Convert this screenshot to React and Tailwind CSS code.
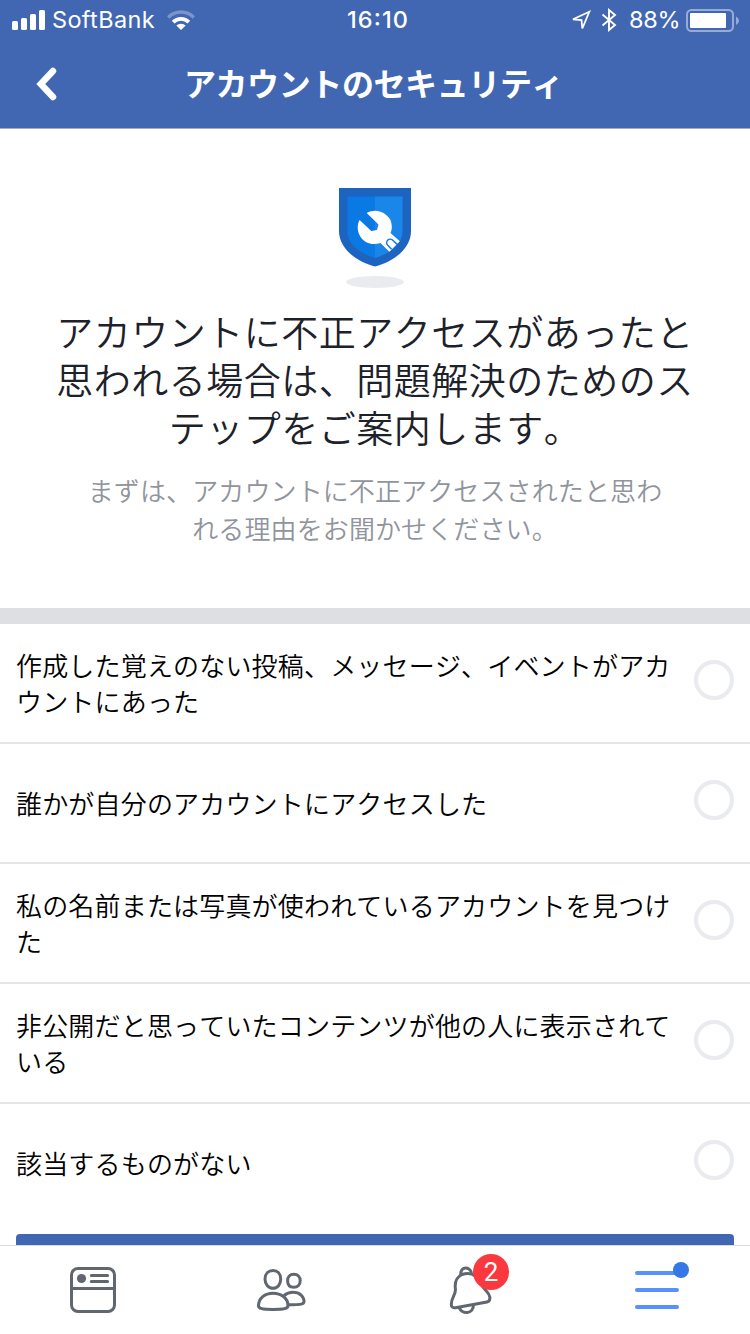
import React from "react";

const OPTIONS = [
  ["作成した覚えのない投稿、メッセージ、イベントがアカ", "ウントにあった"],
  ["誰かが自分のアカウントにアクセスした"],
  ["私の名前または写真が使われているアカウントを見つけ", "た"],
  ["非公開だと思っていたコンテンツが他の人に表示されて", "いる"],
  ["該当するものがない"],
];

function StatusBar() {
  return (
    <div className="grid h-10 grid-cols-3 items-center font-['Inter','Liberation_Sans',sans-serif] text-[23.5px] leading-10 text-white">
      <div className="flex items-center pl-3">
        <svg width="33" height="20" viewBox="0 0 33 20" fill="#fff">
          <rect x="0" y="11" width="6" height="9" rx="1.5" />
          <rect x="9" y="8" width="6" height="12" rx="1.5" />
          <rect x="18" y="4" width="6" height="16" rx="1.5" />
          <rect x="27" y="0" width="6" height="20" rx="1.5" />
        </svg>
        <span className="ml-[7px] w-[103px] whitespace-nowrap tracking-[0.35px]">SoftBank</span>
        <svg className="ml-[12px]" width="28" height="20" viewBox="0 0 28 20">
          <path d="M0 6.2A19.5 19.5 0 0 1 28 6.2L25.6 8.8A16 16 0 0 0 2.4 8.8Z" fill="#fff" opacity=".3" />
          <path d="M4.8 10.8A13 13 0 0 1 23.2 10.8L20.5 13.6A9 9 0 0 0 7.5 13.6Z" fill="#fff" />
          <path d="M9.3 15.6A6.6 6.6 0 0 1 18.7 15.6L14 20Z" fill="#fff" />
        </svg>
      </div>
      <div className="text-center text-[23.5px] font-[550] tracking-[1.1px] [font-feature-settings:'case']">
        <span className="ml-[6px]">16:10</span>
      </div>
      <div className="flex items-center justify-end pr-[11px]">
        <svg width="22" height="22" viewBox="0 0 22 22" fill="none" stroke="#fff" strokeWidth="1.8" strokeLinejoin="miter" strokeMiterlimit="3">
          <path d="M19.3 2.8L3 10.3L11.5 11L12.3 19.5Z" />
        </svg>
        <svg className="ml-[9px]" width="16" height="24" viewBox="0 0 16 24" fill="none" stroke="#fff" strokeWidth="1.9">
          <path d="M1.5 6.5L14 17L8 22V2L14 7L1.5 17.5" />
        </svg>
        <span className="ml-[12px] w-[52px] whitespace-nowrap tracking-[-0.3px]">88%</span>
        <svg className="ml-[5px]" width="53" height="24" viewBox="0 0 53 24">
          <rect x="1" y="2" width="46" height="21" rx="4.5" fill="none" stroke="#fff" strokeOpacity=".45" strokeWidth="2" />
          <rect x="4" y="5" width="36" height="15" rx="1" fill="#fff" />
          <path d="M50 8.5Q53 10 53 12.7T50 17Z" fill="#fff" opacity=".45" />
        </svg>
      </div>
    </div>
  );
}

function Header() {
  return (
    <header className="h-[129px] shrink-0 border-b border-[#a9a9ab] bg-[#4267b2]">
      <StatusBar />
      <div className="grid h-[88px] grid-cols-[120px_1fr_120px] items-center">
        <svg className="ml-9" width="22" height="34" viewBox="0 0 22 34" fill="none" stroke="#fff" strokeWidth="6.5" strokeLinecap="round" strokeLinejoin="miter">
          <path d="M17 4L4.8 17L17 30" />
        </svg>
        <h1 className="-mt-1 whitespace-nowrap pr-[3px] text-center text-[32px] font-bold leading-[44px] tracking-[-0.4px] text-white [font-kerning:none]">
          アカウントのセキュリティ
        </h1>
      </div>
    </header>
  );
}

function Shield() {
  return (
    <svg className="mx-auto block" width="72" height="101" viewBox="0 0 72 101">
      <path d="M0 0H72V43C72 60 56 73 36 78.6C16 73 0 60 0 43Z" fill="#1d64c0" />
      <path d="M8.5 8.5H36V70C20 65 8.5 56 8.5 43Z" fill="#0b79e3" />
      <path d="M36 8.5H63.5V43C63.5 56 52 65 36 70Z" fill="#1a86ea" />
      <path d="M27.7 25C37 19.8 47 24.5 51.5 32C53.3 37 53.3 41.5 51.5 45L60.8 53.2L50.3 63.8L41.5 55C32 58.2 23 54 19.8 45.5C18 40 18.7 35.5 20.6 32L32.3 43L38 42L39.5 36.5Z" fill="#fff" />
      <path d="M52.6 61.2L48.6 57A3.4 3.4 0 0 1 53.8 52.3L58.2 56.4" fill="none" stroke="#1a79dd" strokeWidth="1.5" />
      <ellipse cx="36" cy="94" rx="29" ry="6" fill="#e9ebee" />
    </svg>
  );
}

function Option({ lines, last }) {
  return (
    <li className={last ? "flex h-[118px] items-center px-4" : "flex h-[120px] items-center border-b-2 border-[#e5e5e7] px-4"}>
      <p className="flex-1 whitespace-nowrap text-[26px] font-[350] leading-9 tracking-[0.18px] text-black [font-kerning:none]">
        {lines.map((line) => (
          <span key={line} className="block">{line}</span>
        ))}
      </p>
      <span className="mb-[6px] size-10 rounded-full border-4 border-[#e9ebee]" />
    </li>
  );
}

function TabBar() {
  return (
    <nav className="grid h-[89px] shrink-0 grid-cols-4 border-t border-[#dcdcde] bg-white">
      <svg className="ml-[70px] mt-[21px]" width="46" height="46" viewBox="0 0 46 46" fill="none" stroke="#606770" strokeWidth="3">
        <rect x="1.5" y="1.5" width="43" height="43" rx="6.5" />
        <path d="M1.5 21.5H44.5" />
        <path d="M21.3 8.6H37.6M21.3 14.6H37.6" strokeLinecap="round" />
        <circle cx="11.5" cy="11.5" r="4.6" fill="#606770" stroke="none" />
      </svg>
      <svg className="ml-[69px] mt-[22px]" width="49" height="44" viewBox="0 0 49 44" fill="none" stroke="#606770" strokeWidth="3">
        <path d="M16 2.5C20.5 2.5 23.7 5.6 23.7 11C23.7 16.5 20.5 20.3 16 20.3S8 16.5 8 11C8 5.6 11.5 2.5 16 2.5Z" />
        <path d="M36.8 6.3C40.7 6.3 43.2 9 43.2 12.8C43.2 16.8 40.7 19.3 36.8 19.3S30.6 16.8 30.6 12.8C30.6 9 33 6.3 36.8 6.3Z" />
        <path d="M16 25.3C24 25.3 31 29.8 31 37.8C31 40.5 27 41.5 16 41.5S1.5 40.5 1.5 37.8C1.5 29.8 8 25.3 16 25.3Z" />
        <path d="M27 27.5C29.5 25.4 32.5 24.3 36 24.3C43 24.3 47 28.5 47 33.7C47 36.5 41.5 37 31 36.7" />
      </svg>
      <div className="relative ml-[75px] mt-[20px] h-12 w-11">
        <svg className="-ml-px" width="43" height="49" viewBox="0 0 43 49" fill="none" stroke="#606770" strokeWidth="3" strokeLinejoin="round">
          <path d="M13 8.5C7.5 11 5.4 15 6.4 23C7 29 2.3 31 2.3 38.5C2.3 41 4 42 6.5 41.7L38 36C40 35.6 41.2 34 40.8 31C40.2 26.5 36.5 25 34 21C29.5 12 25 5 13 8.5Z" />
          <path d="M11.8 9C11 0 21 0 22.4 7M10 41.4C13 49 24.5 48.3 24.5 38.7" />
        </svg>
        <span className="absolute left-[23px] top-[-12px] flex size-9 items-center justify-center rounded-full bg-[#fa383e] font-['Roboto',sans-serif] text-[26px] leading-none text-white">2</span>
      </div>
      <svg className="ml-[72px] mt-[16px]" width="55" height="50" viewBox="0 0 55 50">
        <path d="M2 11H42M2 28H42M2 45H42" stroke="#5890ff" strokeWidth="4" strokeLinecap="round" />
        <circle cx="46" cy="8" r="8" fill="#3578e5" />
      </svg>
    </nav>
  );
}

export default function App() {
  return (
    <div className="flex h-[1334px] w-[750px] flex-col overflow-hidden bg-white font-['Noto_Sans_CJK_JP',sans-serif]" lang="ja">
      <Header />
      <main className="min-h-0 flex-1 overflow-hidden">
        <section className="h-[479px] pt-[59px] text-center">
          <Shield />
          <h2 className="mt-[18px] whitespace-nowrap text-[37px] font-[350] leading-[48px] tracking-[0.5px] text-[#1d2129] [font-kerning:none]">
            アカウントに不正アクセスがあったと<br />
            思われる場合は、問題解決のためのス<br />
            テップをご案内します。
          </h2>
          <p className="mt-[20px] whitespace-nowrap text-[26px] font-[350] leading-[38px] tracking-[0.12px] text-[#90949c] [font-kerning:none]">
            まずは、アカウントに不正アクセスされたと思わ<br />
            れる理由をお聞かせください。
          </p>
        </section>
        <div className="h-4 bg-[#dddfe2]" />
        <ul>
          {OPTIONS.map((lines, i) => (
            <Option key={lines[0]} lines={lines} last={i === OPTIONS.length - 1} />
          ))}
        </ul>
        <div className="mx-4 mt-[12px] h-20 rounded-[4px] bg-[#4267b2]" />
      </main>
      <TabBar />
    </div>
  );
}
